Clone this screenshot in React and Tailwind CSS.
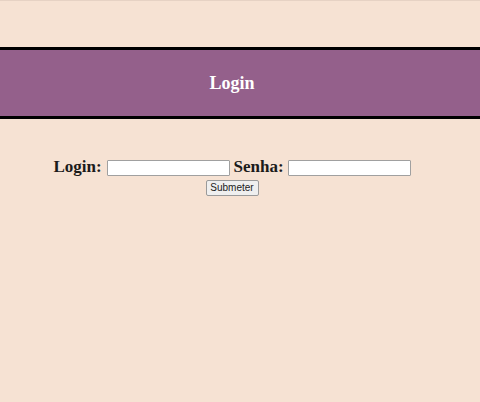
export default function App() {
  return (
    <div className="min-h-[402px] bg-[#f6e2d3] border-t border-[#e6d2c4] font-['Liberation_Serif',serif]">
      {/* Cabeçalho */}
      <div className="mt-[46px] h-[72px] border-y-[3px] border-black bg-[#94608b] flex items-center justify-center pr-4">
        <h1 className="text-white font-bold text-[18px] leading-none">Login</h1>
      </div>

      {/* Formulário */}
      <form className="ml-[54px] w-[356px] mt-[41px] flex flex-col items-center">
        <div className="flex items-center h-[16px]">
          <label className="font-bold text-[17px] text-[#1b1b1b] leading-none mr-[5px] mb-[4px]">Login:</label>
          <input
            type="text"
            className="w-[123px] h-[16px] bg-white border border-[#a0a0a0] rounded-[1px] mr-[4px]"
          />
          <label className="font-bold text-[17px] text-[#1b1b1b] leading-none mr-[4px] mb-[4px]">Senha:</label>
          <input
            type="password"
            className="w-[123px] h-[16px] bg-white border border-[#a0a0a0] rounded-[1px]"
          />
        </div>
        <button
          type="button"
          className="mt-[4px] w-[53px] h-[16px] bg-[#efefef] border border-[#9a9a9a] rounded-[2px] font-['Liberation_Sans',sans-serif] text-[10px] leading-none text-[#222]"
        >
          Submeter
        </button>
      </form>
    </div>
  );
}
